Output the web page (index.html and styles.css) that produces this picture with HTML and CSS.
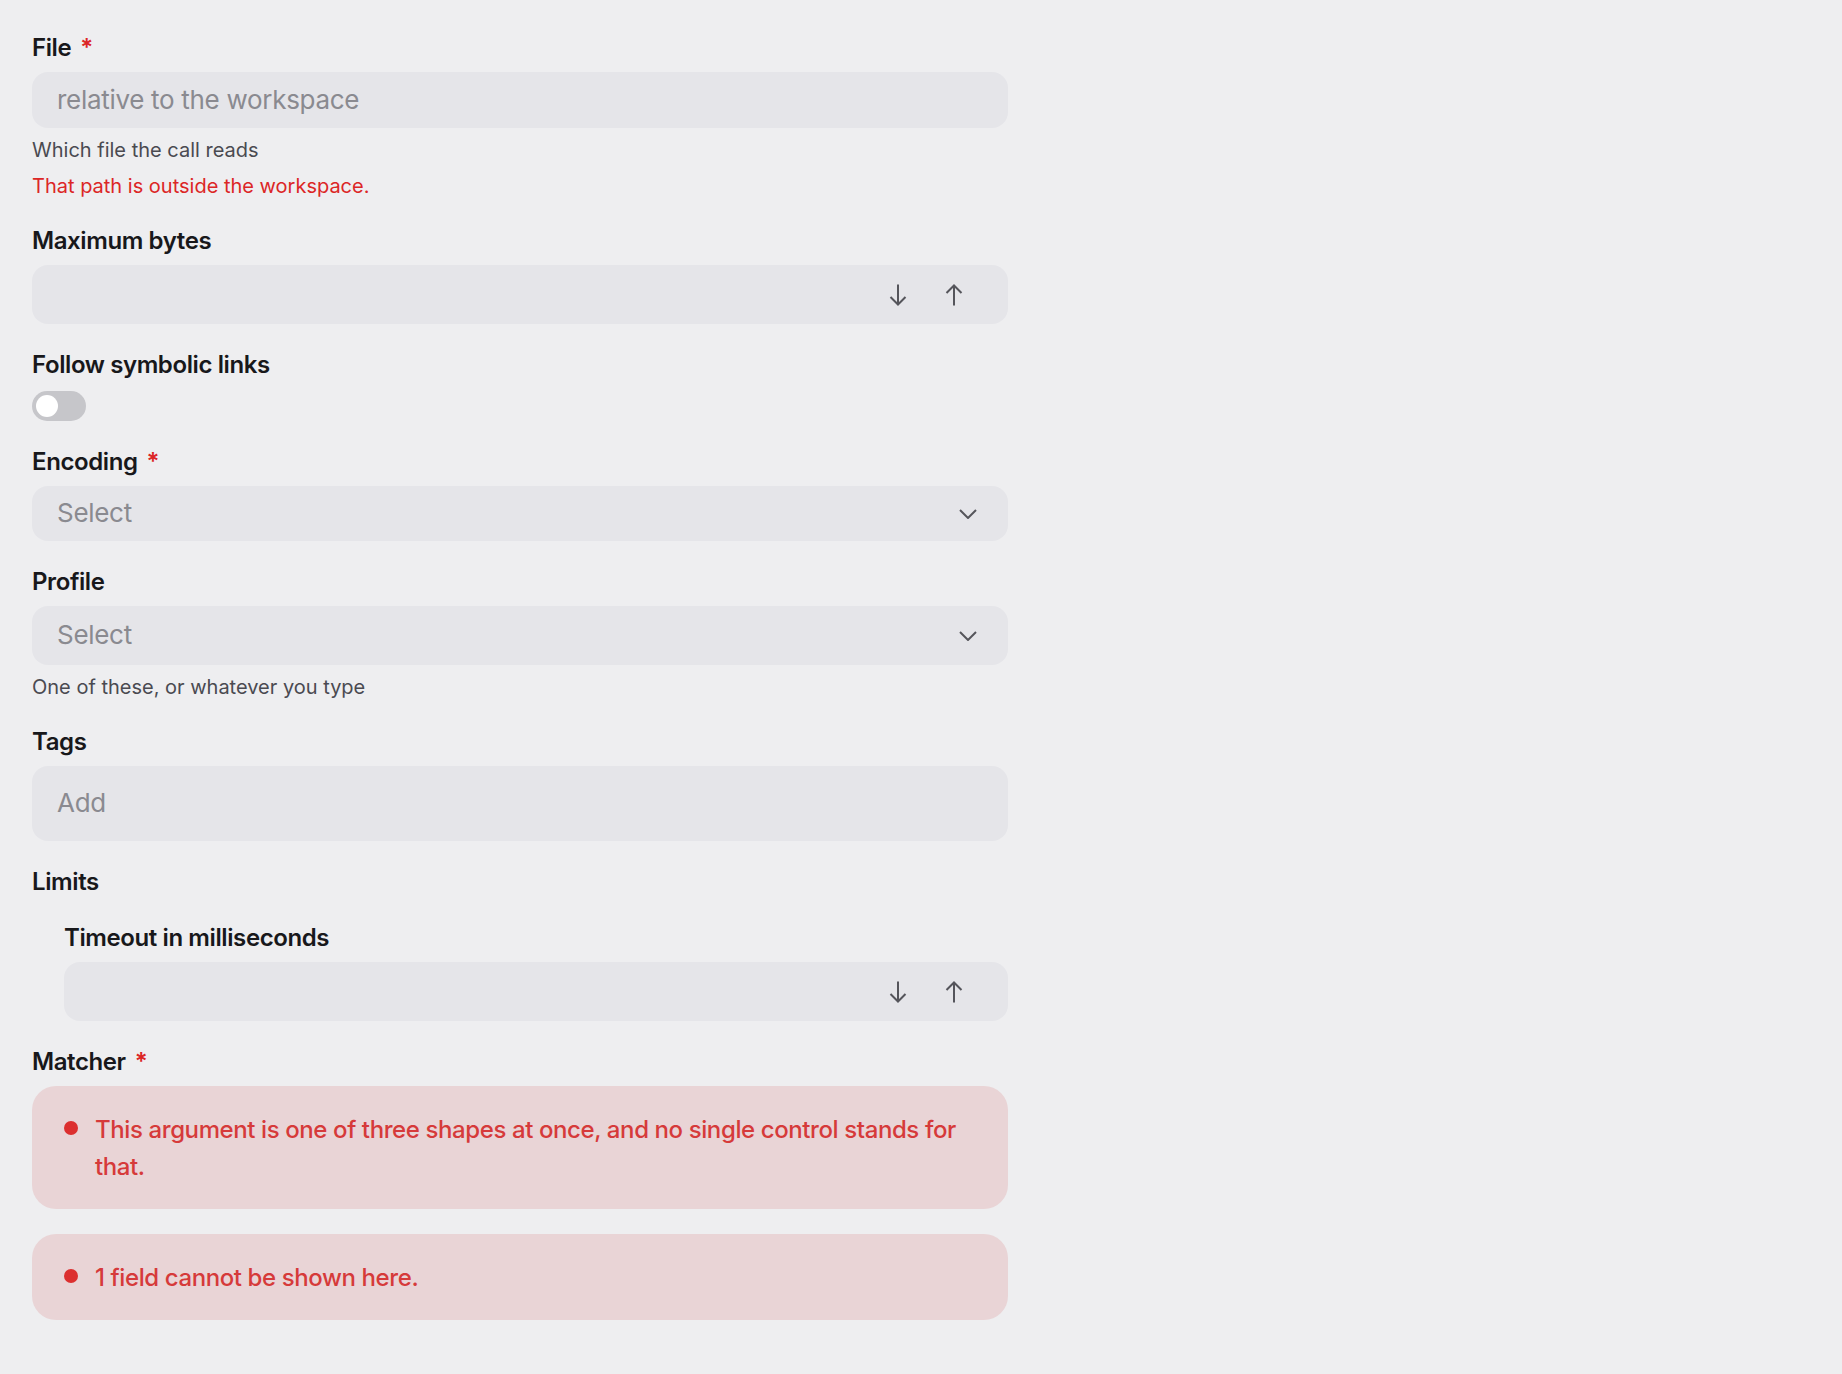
FILE: index.html
```html
<!DOCTYPE html>
<html lang="en">
<head>
<meta charset="utf-8">
<title>Tool call form</title>
<link rel="stylesheet" href="styles.css">
</head>
<body>
<form class="form">
  <div class="field">
    <div class="label">File<span class="req">*</span></div>
    <div class="control h56"><span class="placeholder">relative to the workspace</span></div>
    <div class="help">Which file the call reads</div>
    <div class="error-text">That path is outside the workspace.</div>
  </div>

  <div class="field">
    <div class="label">Maximum bytes</div>
    <div class="control h59 number">
      <span class="spacer"></span>
      <span class="steppers">
        <svg class="arrow" width="18" height="22" viewBox="0 0 18 22"><path d="M9 0.5V20.5M1.5 13L9 20.5L16.5 13" fill="none" stroke="#55555b" stroke-width="2"/></svg>
        <svg class="arrow" width="18" height="22" viewBox="0 0 18 22"><path d="M9 21.5V1.5M1.5 9L9 1.5L16.5 9" fill="none" stroke="#55555b" stroke-width="2"/></svg>
      </span>
    </div>
  </div>

  <div class="field">
    <div class="label">Follow symbolic links</div>
    <div class="toggle"><span class="knob"></span></div>
  </div>

  <div class="field">
    <div class="label">Encoding<span class="req">*</span></div>
    <div class="control h55 select">
      <span class="placeholder">Select</span>
      <svg class="chev" width="18" height="10" viewBox="0 0 18 10"><path d="M1 1L9 9L17 1" fill="none" stroke="#55555b" stroke-width="2"/></svg>
    </div>
  </div>

  <div class="field">
    <div class="label">Profile</div>
    <div class="control h59 select">
      <span class="placeholder">Select</span>
      <svg class="chev" width="18" height="10" viewBox="0 0 18 10"><path d="M1 1L9 9L17 1" fill="none" stroke="#55555b" stroke-width="2"/></svg>
    </div>
    <div class="help">One of these, or whatever you type</div>
  </div>

  <div class="field">
    <div class="label">Tags</div>
    <div class="control h75"><span class="placeholder">Add</span></div>
  </div>

  <div class="field group">
    <div class="label">Limits</div>
    <div class="group-body">
      <div class="field">
        <div class="label">Timeout in milliseconds</div>
        <div class="control h59 number">
          <span class="spacer"></span>
          <span class="steppers">
            <svg class="arrow" width="18" height="22" viewBox="0 0 18 22"><path d="M9 0.5V20.5M1.5 13L9 20.5L16.5 13" fill="none" stroke="#55555b" stroke-width="2"/></svg>
            <svg class="arrow" width="18" height="22" viewBox="0 0 18 22"><path d="M9 21.5V1.5M1.5 9L9 1.5L16.5 9" fill="none" stroke="#55555b" stroke-width="2"/></svg>
          </span>
        </div>
      </div>
    </div>
  </div>

  <div class="field">
    <div class="label">Matcher<span class="req">*</span></div>
    <div class="notice">
      <span class="dot"></span>
      <span class="notice-text">This argument is one of three shapes at once, and no single control stands for that.</span>
    </div>
  </div>

  <div class="notice">
    <span class="dot"></span>
    <span class="notice-text">1 field cannot be shown here.</span>
  </div>
</form>
</body>
</html>
```

FILE: styles.css
```css
* { box-sizing: border-box; }
html, body { margin: 0; padding: 0; }
body {
  background: #eeeef0;
  font-family: Inter, "Noto Sans", "Liberation Sans", sans-serif;
  color: #18181b;
}
.form {
  width: 1040px;
  padding: 32px;
  display: flex;
  flex-direction: column;
  gap: 25px;
}
.field {
  display: flex;
  flex-direction: column;
  gap: 8px;
}
.label {
  font-size: 24px;
  line-height: 32px;
  font-weight: 600;
  letter-spacing: -0.4px;
  color: #18181b;
}
.req {
  color: #dc2626;
  margin-left: 9px;
}
.control {
  background: #e5e5e9;
  border-radius: 16px;
  display: flex;
  align-items: center;
  padding: 0 31px 0 25px;
}
.h55 { height: 55px; }
.h56 { height: 56px; }
.h59 { height: 59px; }
.h75 { height: 75px; }
.placeholder {
  font-size: 26px;
  letter-spacing: -0.3px;
  color: #8a8a90;
  flex: 1;
  margin-top: -2px;
}
.select .chev { flex: none; }
.number { padding-right: 45px; }
.spacer { flex: 1; }
.steppers {
  display: flex;
  gap: 38px;
  align-items: center;
}
.arrow { display: block; }
.help {
  font-size: 20px;
  line-height: 28px;
  color: #4a4a51;
}
.error-text {
  font-size: 20px;
  line-height: 28px;
  color: #dc2626;
}
.toggle {
  width: 54px;
  height: 30px;
  border-radius: 15px;
  background: #c6c6ca;
  padding: 4px;
  margin-top: 2px;
  display: flex;
}
.knob {
  width: 22px;
  height: 22px;
  border-radius: 50%;
  background: #ffffff;
}
.group { gap: 24px; }
.group-body {
  padding-left: 32px;
  display: flex;
  flex-direction: column;
}
.notice {
  background: #e9d4d6;
  border-radius: 24px;
  padding: 24.5px 32px;
  display: flex;
  align-items: flex-start;
  gap: 17px;
}
.dot {
  flex: none;
  width: 14px;
  height: 14px;
  border-radius: 50%;
  background: #dc2f2f;
  margin-top: 10px;
}
.notice-text {
  font-size: 24px;
  line-height: 37px;
  font-weight: 500;
  letter-spacing: -0.4px;
  color: #d63a3a;
}
```
